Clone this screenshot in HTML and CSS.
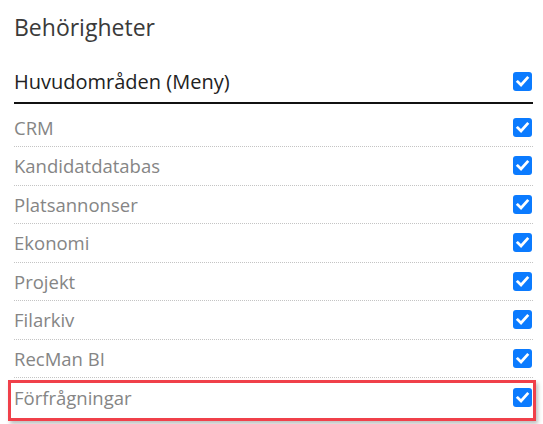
FILE: index.html
```html
<!DOCTYPE html>
<html lang="sv">
<head>
<meta charset="utf-8">
<title>Behörigheter</title>
<link rel="stylesheet" href="styles.css">
</head>
<body>
<div class="panel">
  <h2 class="title">Behörigheter</h2>
  <div class="row head">
    <span class="label">Huvudområden (Meny)</span>
    <span class="cb"><svg viewBox="0 0 18 18"><path d="M4.5 9.3 L7.6 12.3 L13.6 5.6" /></svg></span>
  </div>
  <div class="list">
    <div class="row item"><span class="label">CRM</span><span class="cb"><svg viewBox="0 0 18 18"><path d="M4.5 9.3 L7.6 12.3 L13.6 5.6" /></svg></span></div>
    <div class="row item"><span class="label">Kandidatdatabas</span><span class="cb"><svg viewBox="0 0 18 18"><path d="M4.5 9.3 L7.6 12.3 L13.6 5.6" /></svg></span></div>
    <div class="row item"><span class="label">Platsannonser</span><span class="cb"><svg viewBox="0 0 18 18"><path d="M4.5 9.3 L7.6 12.3 L13.6 5.6" /></svg></span></div>
    <div class="row item"><span class="label">Ekonomi</span><span class="cb"><svg viewBox="0 0 18 18"><path d="M4.5 9.3 L7.6 12.3 L13.6 5.6" /></svg></span></div>
    <div class="row item"><span class="label">Projekt</span><span class="cb"><svg viewBox="0 0 18 18"><path d="M4.5 9.3 L7.6 12.3 L13.6 5.6" /></svg></span></div>
    <div class="row item"><span class="label">Filarkiv</span><span class="cb"><svg viewBox="0 0 18 18"><path d="M4.5 9.3 L7.6 12.3 L13.6 5.6" /></svg></span></div>
    <div class="row item"><span class="label">RecMan BI</span><span class="cb"><svg viewBox="0 0 18 18"><path d="M4.5 9.3 L7.6 12.3 L13.6 5.6" /></svg></span></div>
    <div class="row item highlight"><span class="label">Förfrågningar</span><span class="cb"><svg viewBox="0 0 18 18"><path d="M4.5 9.3 L7.6 12.3 L13.6 5.6" /></svg></span></div>
  </div>
</div>
</body>
</html>
```

FILE: styles.css
```css
* { box-sizing: border-box; }
html, body { margin: 0; padding: 0; background: #fff; }
body {
  font-family: "Open Sans", "Noto Sans", sans-serif;
  width: 543px;
  height: 424px;
  overflow: hidden;
}
.panel {
  padding: 0 10px 0 14px;
}
.title {
  margin: 0;
  padding-top: 13px;
  height: 62px;
  font-size: 23px;
  font-weight: 400;
  line-height: 29px;
  color: #3a3a3a;
}
.row {
  display: flex;
  align-items: center;
  justify-content: space-between;
}
.head {
  height: 42px;
  border-bottom: 2px solid #111;
  padding-bottom: 2px;
}
.head .label {
  font-size: 20px;
  color: #222;
}
.list {
  padding-top: 4.5px;
}
.item {
  height: 38.5px;
  border-bottom: 1px dotted #c4c4c4;
  position: relative;
}
.item .label {
  font-size: 18.5px;
  color: #858585;
}
.item:last-child { border-bottom: none; }
.cb {
  width: 19px;
  height: 19px;
  border-radius: 3px;
  background: #0b7bff;
  display: flex;
  margin-right: 1px;
}
.cb svg { width: 19px; height: 19px; }
.cb path {
  fill: none;
  stroke: #fff;
  stroke-width: 2.6;
  stroke-linecap: square;
}
.highlight::after {
  content: "";
  position: absolute;
  left: -6px;
  right: -3px;
  top: 1.5px;
  bottom: -4px;
  border: 3px solid #f0404a;
  box-shadow: 2px 3px 4px rgba(0,0,0,0.25);
  pointer-events: none;
}
```
